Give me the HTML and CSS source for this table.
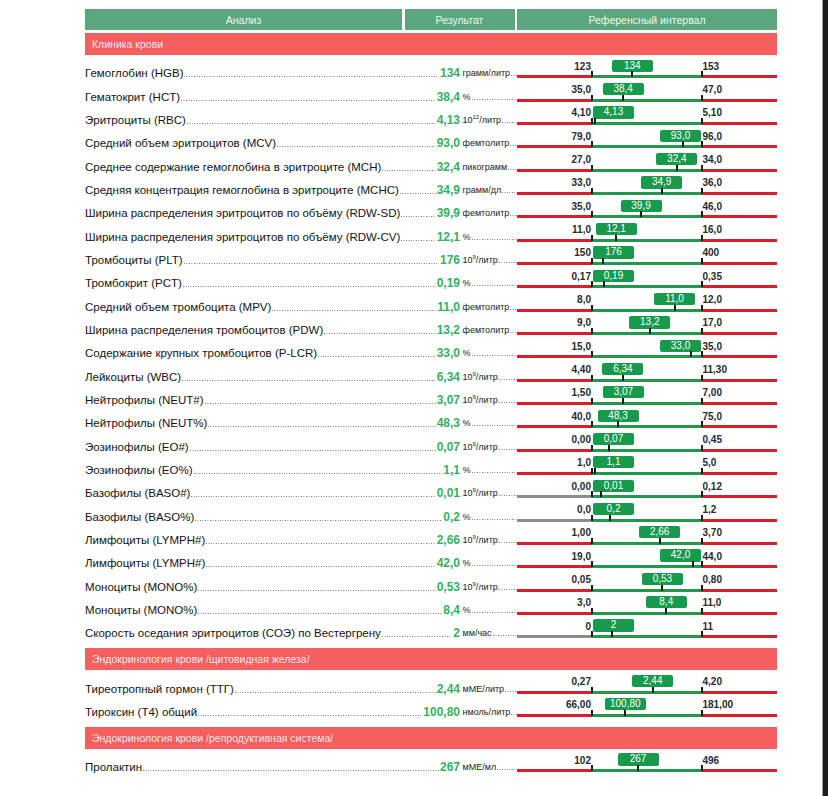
FILE: index.html
```html
<!DOCTYPE html>
<html lang="ru">
<head>
<meta charset="utf-8">
<title>Анализ крови</title>
<link rel="stylesheet" href="styles.css">
</head>
<body>
<div class="page">
  <div class="sheet">
    <div class="thead">
      <div class="th">Анализ</div>
      <div class="th">Результат</div>
      <div class="th">Референсный интервал</div>
    </div>

    <div class="section first">Клиника крови</div>

    <div class="row"><div class="name"><span class="label">Гемоглобин (HGB)</span><span class="lead"></span><span class="val">134</span></div><div class="unit"><span>грамм/литр</span><span class="lead"></span></div><div class="range" style="--v:.3667"><span class="lo">123</span><span class="mid"><span class="pill">134</span></span><span class="hi">153</span><span class="seg out"></span><span class="seg ok"><i class="tick"></i></span><span class="seg out"></span></div></div>

    <div class="row"><div class="name"><span class="label">Гематокрит (HCT)</span><span class="lead"></span><span class="val">38,4</span></div><div class="unit"><span>%</span><span class="lead"></span></div><div class="range" style="--v:.2833"><span class="lo">35,0</span><span class="mid"><span class="pill">38,4</span></span><span class="hi">47,0</span><span class="seg out"></span><span class="seg ok"><i class="tick"></i></span><span class="seg out"></span></div></div>

    <div class="row"><div class="name"><span class="label">Эритроциты (RBC)</span><span class="lead"></span><span class="val">4,13</span></div><div class="unit"><span>10<sup>12</sup>/литр</span><span class="lead"></span></div><div class="range" style="--v:.03"><span class="lo">4,10</span><span class="mid"><span class="pill">4,13</span></span><span class="hi">5,10</span><span class="seg out"></span><span class="seg ok"><i class="tick"></i></span><span class="seg out"></span></div></div>

    <div class="row"><div class="name"><span class="label">Средний объем эритроцитов (MCV)</span><span class="lead"></span><span class="val">93,0</span></div><div class="unit"><span>фемтолитр</span><span class="lead"></span></div><div class="range" style="--v:.8235"><span class="lo">79,0</span><span class="mid"><span class="pill">93,0</span></span><span class="hi">96,0</span><span class="seg out"></span><span class="seg ok"><i class="tick"></i></span><span class="seg out"></span></div></div>

    <div class="row"><div class="name"><span class="label">Среднее содержание гемоглобина в эритроците (MCH)</span><span class="lead"></span><span class="val">32,4</span></div><div class="unit"><span>пикограмм</span><span class="lead"></span></div><div class="range" style="--v:.7714"><span class="lo">27,0</span><span class="mid"><span class="pill">32,4</span></span><span class="hi">34,0</span><span class="seg out"></span><span class="seg ok"><i class="tick"></i></span><span class="seg out"></span></div></div>

    <div class="row"><div class="name"><span class="label">Средняя концентрация гемоглобина в эритроците (MCHC)</span><span class="lead"></span><span class="val">34,9</span></div><div class="unit"><span>грамм/дл</span><span class="lead"></span></div><div class="range" style="--v:.6333"><span class="lo">33,0</span><span class="mid"><span class="pill">34,9</span></span><span class="hi">36,0</span><span class="seg out"></span><span class="seg ok"><i class="tick"></i></span><span class="seg out"></span></div></div>

    <div class="row"><div class="name"><span class="label">Ширина распределения эритроцитов по объёму (RDW-SD)</span><span class="lead"></span><span class="val">39,9</span></div><div class="unit"><span>фемтолитр</span><span class="lead"></span></div><div class="range" style="--v:.4455"><span class="lo">35,0</span><span class="mid"><span class="pill">39,9</span></span><span class="hi">46,0</span><span class="seg out"></span><span class="seg ok"><i class="tick"></i></span><span class="seg out"></span></div></div>

    <div class="row"><div class="name"><span class="label">Ширина распределения эритроцитов по объёму (RDW-CV)</span><span class="lead"></span><span class="val">12,1</span></div><div class="unit"><span>%</span><span class="lead"></span></div><div class="range" style="--v:.22"><span class="lo">11,0</span><span class="mid"><span class="pill">12,1</span></span><span class="hi">16,0</span><span class="seg out"></span><span class="seg ok"><i class="tick"></i></span><span class="seg out"></span></div></div>

    <div class="row"><div class="name"><span class="label">Тромбоциты (PLT)</span><span class="lead"></span><span class="val">176</span></div><div class="unit"><span>10<sup>9</sup>/литр</span><span class="lead"></span></div><div class="range" style="--v:.104"><span class="lo">150</span><span class="mid"><span class="pill">176</span></span><span class="hi">400</span><span class="seg out"></span><span class="seg ok"><i class="tick"></i></span><span class="seg out"></span></div></div>

    <div class="row"><div class="name"><span class="label">Тромбокрит (PCT)</span><span class="lead"></span><span class="val">0,19</span></div><div class="unit"><span>%</span><span class="lead"></span></div><div class="range" style="--v:.111"><span class="lo">0,17</span><span class="mid"><span class="pill">0,19</span></span><span class="hi">0,35</span><span class="seg out"></span><span class="seg ok"><i class="tick"></i></span><span class="seg out"></span></div></div>

    <div class="row"><div class="name"><span class="label">Средний объем тромбоцита (MPV)</span><span class="lead"></span><span class="val">11,0</span></div><div class="unit"><span>фемтолитр</span><span class="lead"></span></div><div class="range" style="--v:.75"><span class="lo">8,0</span><span class="mid"><span class="pill">11,0</span></span><span class="hi">12,0</span><span class="seg out"></span><span class="seg ok"><i class="tick"></i></span><span class="seg out"></span></div></div>

    <div class="row"><div class="name"><span class="label">Ширина распределения тромбоцитов (PDW)</span><span class="lead"></span><span class="val">13,2</span></div><div class="unit"><span>фемтолитр</span><span class="lead"></span></div><div class="range" style="--v:.525"><span class="lo">9,0</span><span class="mid"><span class="pill">13,2</span></span><span class="hi">17,0</span><span class="seg out"></span><span class="seg ok"><i class="tick"></i></span><span class="seg out"></span></div></div>

    <div class="row"><div class="name"><span class="label">Содержание крупных тромбоцитов (P-LCR)</span><span class="lead"></span><span class="val">33,0</span></div><div class="unit"><span>%</span><span class="lead"></span></div><div class="range" style="--v:.9"><span class="lo">15,0</span><span class="mid"><span class="pill">33,0</span></span><span class="hi">35,0</span><span class="seg out"></span><span class="seg ok"><i class="tick"></i></span><span class="seg out"></span></div></div>

    <div class="row"><div class="name"><span class="label">Лейкоциты (WBC)</span><span class="lead"></span><span class="val">6,34</span></div><div class="unit"><span>10<sup>9</sup>/литр</span><span class="lead"></span></div><div class="range" style="--v:.2812"><span class="lo">4,40</span><span class="mid"><span class="pill">6,34</span></span><span class="hi">11,30</span><span class="seg out"></span><span class="seg ok"><i class="tick"></i></span><span class="seg out"></span></div></div>

    <div class="row"><div class="name"><span class="label">Нейтрофилы (NEUT#)</span><span class="lead"></span><span class="val">3,07</span></div><div class="unit"><span>10<sup>9</sup>/литр</span><span class="lead"></span></div><div class="range" style="--v:.2855"><span class="lo">1,50</span><span class="mid"><span class="pill">3,07</span></span><span class="hi">7,00</span><span class="seg out"></span><span class="seg ok"><i class="tick"></i></span><span class="seg out"></span></div></div>

    <div class="row"><div class="name"><span class="label">Нейтрофилы (NEUT%)</span><span class="lead"></span><span class="val">48,3</span></div><div class="unit"><span>%</span><span class="lead"></span></div><div class="range" style="--v:.2371"><span class="lo">40,0</span><span class="mid"><span class="pill">48,3</span></span><span class="hi">75,0</span><span class="seg out"></span><span class="seg ok"><i class="tick"></i></span><span class="seg out"></span></div></div>

    <div class="row"><div class="name"><span class="label">Эозинофилы (EO#)</span><span class="lead"></span><span class="val">0,07</span></div><div class="unit"><span>10<sup>9</sup>/литр</span><span class="lead"></span></div><div class="range" style="--v:.1556"><span class="lo">0,00</span><span class="mid"><span class="pill">0,07</span></span><span class="hi">0,45</span><span class="seg out"></span><span class="seg ok"><i class="tick"></i></span><span class="seg out"></span></div></div>

    <div class="row"><div class="name"><span class="label">Эозинофилы (EO%)</span><span class="lead"></span><span class="val">1,1</span></div><div class="unit"><span>%</span><span class="lead"></span></div><div class="range" style="--v:.025"><span class="lo">1,0</span><span class="mid"><span class="pill">1,1</span></span><span class="hi">5,0</span><span class="seg out"></span><span class="seg ok"><i class="tick"></i></span><span class="seg out"></span></div></div>

    <div class="row"><div class="name"><span class="label">Базофилы (BASO#)</span><span class="lead"></span><span class="val">0,01</span></div><div class="unit"><span>10<sup>9</sup>/литр</span><span class="lead"></span></div><div class="range" style="--v:.0833"><span class="lo">0,00</span><span class="mid"><span class="pill">0,01</span></span><span class="hi">0,12</span><span class="seg none"></span><span class="seg ok"><i class="tick"></i></span><span class="seg out"></span></div></div>

    <div class="row"><div class="name"><span class="label">Базофилы (BASO%)</span><span class="lead"></span><span class="val">0,2</span></div><div class="unit"><span>%</span><span class="lead"></span></div><div class="range" style="--v:.1667"><span class="lo">0,0</span><span class="mid"><span class="pill">0,2</span></span><span class="hi">1,2</span><span class="seg none"></span><span class="seg ok"><i class="tick"></i></span><span class="seg out"></span></div></div>

    <div class="row"><div class="name"><span class="label">Лимфоциты (LYMPH#)</span><span class="lead"></span><span class="val">2,66</span></div><div class="unit"><span>10<sup>9</sup>/литр</span><span class="lead"></span></div><div class="range" style="--v:.6148"><span class="lo">1,00</span><span class="mid"><span class="pill">2,66</span></span><span class="hi">3,70</span><span class="seg out"></span><span class="seg ok"><i class="tick"></i></span><span class="seg out"></span></div></div>

    <div class="row"><div class="name"><span class="label">Лимфоциты (LYMPH#)</span><span class="lead"></span><span class="val">42,0</span></div><div class="unit"><span>%</span><span class="lead"></span></div><div class="range" style="--v:.92"><span class="lo">19,0</span><span class="mid"><span class="pill">42,0</span></span><span class="hi">44,0</span><span class="seg out"></span><span class="seg ok"><i class="tick"></i></span><span class="seg out"></span></div></div>

    <div class="row"><div class="name"><span class="label">Моноциты (MONO%)</span><span class="lead"></span><span class="val">0,53</span></div><div class="unit"><span>10<sup>9</sup>/литр</span><span class="lead"></span></div><div class="range" style="--v:.64"><span class="lo">0,05</span><span class="mid"><span class="pill">0,53</span></span><span class="hi">0,80</span><span class="seg out"></span><span class="seg ok"><i class="tick"></i></span><span class="seg out"></span></div></div>

    <div class="row"><div class="name"><span class="label">Моноциты (MONO%)</span><span class="lead"></span><span class="val">8,4</span></div><div class="unit"><span>%</span><span class="lead"></span></div><div class="range" style="--v:.675"><span class="lo">3,0</span><span class="mid"><span class="pill">8,4</span></span><span class="hi">11,0</span><span class="seg out"></span><span class="seg ok"><i class="tick"></i></span><span class="seg out"></span></div></div>

    <div class="row"><div class="name"><span class="label">Скорость оседания эритроцитов (СОЭ) по Вестергрену</span><span class="lead"></span><span class="val">2</span></div><div class="unit"><span>мм/час</span><span class="lead"></span></div><div class="range" style="--v:.1818"><span class="lo">0</span><span class="mid"><span class="pill">2</span></span><span class="hi">11</span><span class="seg none"></span><span class="seg ok"><i class="tick"></i></span><span class="seg out"></span></div></div>

    <div class="section">Эндокринология крови /щитовидная железа/</div>

    <div class="row"><div class="name"><span class="label">Тиреотропный гормон (ТТГ)</span><span class="lead"></span><span class="val">2,44</span></div><div class="unit"><span>мМЕ/литр</span><span class="lead"></span></div><div class="range" style="--v:.5522"><span class="lo">0,27</span><span class="mid"><span class="pill">2,44</span></span><span class="hi">4,20</span><span class="seg out"></span><span class="seg ok"><i class="tick"></i></span><span class="seg out"></span></div></div>

    <div class="row"><div class="name"><span class="label">Тироксин (Т4) общий</span><span class="lead"></span><span class="val">100,80</span></div><div class="unit"><span>нмоль/литр</span><span class="lead"></span></div><div class="range" style="--v:.3026"><span class="lo">66,00</span><span class="mid"><span class="pill">100,80</span></span><span class="hi">181,00</span><span class="seg out"></span><span class="seg ok"><i class="tick"></i></span><span class="seg out"></span></div></div>

    <div class="section">Эндокринология крови /репродуктивная система/</div>

    <div class="row"><div class="name"><span class="label">Пролактин</span><span class="lead"></span><span class="val">267</span></div><div class="unit"><span>мМЕ/мл</span><span class="lead"></span></div><div class="range" style="--v:.4188"><span class="lo">102</span><span class="mid"><span class="pill">267</span></span><span class="hi">496</span><span class="seg out"></span><span class="seg ok"><i class="tick"></i></span><span class="seg out"></span></div></div>
  </div>
</div>
<div class="edge"></div>
</body>
</html>
```

FILE: styles.css
```css
html, body {
  margin: 0;
  padding: 0;
  background: #ffffff;
}

body {
  display: flex;
  min-height: 100vh;
  font-family: "Liberation Sans", Arial, sans-serif;
  color: #141414;
}

.page {
  flex: 1;
  min-width: 0;
}

.edge {
  width: 5px;
  flex: none;
  background: #1c1c1c;
  border-left: 1px solid #9a9a9a;
}

.sheet {
  width: 692px;
  margin-left: 85px;
  padding-top: 9px;
}

/* table head */
.thead {
  display: grid;
  grid-template-columns: 317px 110px 1fr;
  column-gap: 2.5px;
  height: 20.5px;
}

.th {
  background: #5ba77d;
  color: #eef7f1;
  font-size: 10.5px;
  text-align: center;
  box-sizing: border-box;
  padding-top: 1.5px;
  line-height: 19px;
}

/* section titles */
.section {
  margin-top: 10px;
  height: 22px;
  box-sizing: border-box;
  padding: 1px 0 0 7px;
  line-height: 21px;
  background: #f55f60;
  color: rgba(255, 255, 255, 0.86);
  font-size: 10.5px;
}

.section.first {
  margin-top: 3.5px;
}

/* data rows */
.row {
  display: grid;
  grid-template-columns: 375px 57px 260px;
  height: 23.33px;
}

.name,
.unit {
  display: flex;
  align-items: baseline;
  align-self: end;
  margin-bottom: -2px;
  line-height: 14px;
  white-space: nowrap;
  min-width: 0;
}

.label {
  font-size: 11.5px;
  color: #141414;
}

.val {
  font-size: 12px;
  font-weight: bold;
  color: #33b263;
}

.unit {
  padding-left: 2.5px;
  font-size: 9px;
  color: #222222;
}

.unit sup {
  font-size: 6px;
  line-height: 0;
}

.lead {
  flex: 1;
  height: 1px;
  min-width: 2px;
  margin: 0 1px 1px;
  background-image: linear-gradient(to right, #6f6f6f 0 1px, transparent 1px);
  background-size: 2.5px 1px;
  background-repeat: repeat-x;
}

.unit .lead {
  margin-right: 0;
}

/* reference range */
.range {
  display: grid;
  grid-template-columns: 75px 110px 1fr;
  grid-template-rows: 1fr 3px;
}

.lo,
.hi {
  align-self: end;
  font-size: 10px;
  font-weight: bold;
  line-height: 10px;
  padding-bottom: 3.5px;
  color: #2a2a2a;
}

.lo {
  text-align: right;
  padding-right: 1px;
}

.hi {
  padding-left: 0.5px;
}

.mid {
  position: relative;
}

.pill {
  position: absolute;
  top: 4.6px;
  left: clamp(1px, calc(var(--v) * 110px - 20.5px), 68px);
  width: 41px;
  height: 12.3px;
  border-radius: 2px;
  background: #179a4b;
  color: #ffffff;
  font-size: 10px;
  line-height: 12.3px;
  text-align: center;
}

.seg {
  grid-row: 2;
  display: block;
}

.seg.out {
  background: #d7202b;
}

.seg.none {
  background: #8d8d8d;
}

.seg.ok {
  position: relative;
  background: #22994a;
}

.seg.ok::before,
.seg.ok::after,
.tick {
  content: "";
  position: absolute;
  top: -4px;
  width: 2px;
  height: 6px;
  background: #1a1a1a;
}

.seg.ok::before {
  left: -1px;
}

.seg.ok::after {
  right: -1px;
}

.tick {
  left: calc(var(--v) * 110px - 1px);
}
```
